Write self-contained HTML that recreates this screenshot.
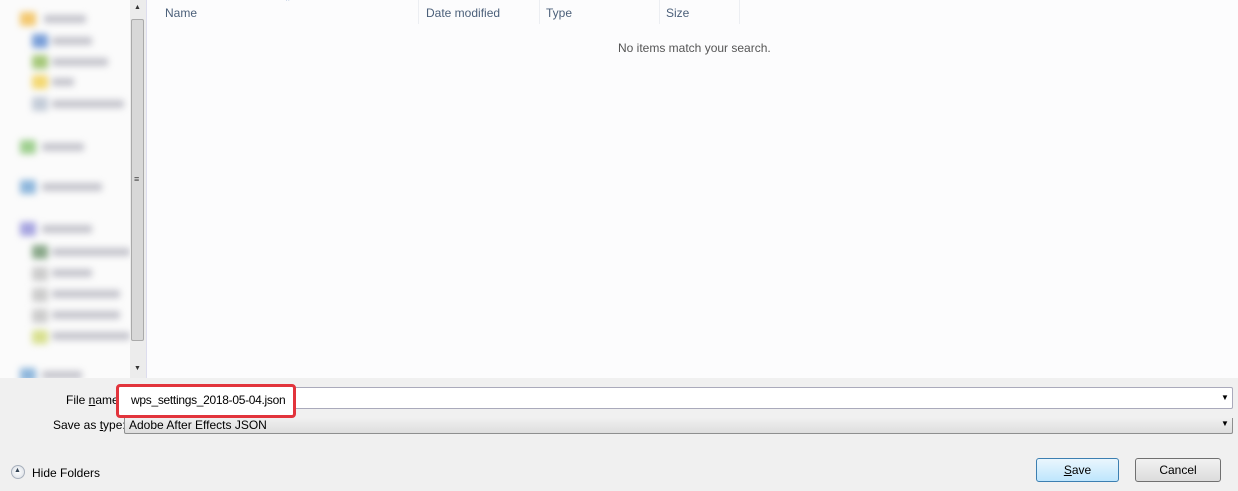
<!DOCTYPE html>
<html><head><style>
body{margin:0;width:1238px;height:491px;overflow:hidden;background:#f0f0f0;font-family:"Liberation Sans",sans-serif;font-size:12px;position:relative}
.a{position:absolute}
.side{left:0;top:0;width:130px;height:378px;background:#fbfbfb;overflow:hidden}
.blur{filter:blur(3.5px)}
.ic{position:absolute;width:16px;height:14px;border-radius:2px}
.tx{position:absolute;height:8px;background:#c4c4cc;border-radius:2px}
.hdr{color:#4c607a;font-size:12px}
</style></head><body>
<div class="a side"><div class="blur">
<div class="ic" style="left:20px;top:12px;background:#f3c870"></div><div class="tx" style="left:44px;top:15px;width:42px"></div>
<div class="ic" style="left:32px;top:34px;background:#7a9fd8"></div><div class="tx" style="left:52px;top:37px;width:40px"></div>
<div class="ic" style="left:32px;top:55px;background:#a6c87a"></div><div class="tx" style="left:52px;top:58px;width:56px"></div>
<div class="ic" style="left:32px;top:75px;background:#f3d873"></div><div class="tx" style="left:52px;top:78px;width:22px"></div>
<div class="ic" style="left:32px;top:97px;background:#c4ccd8"></div><div class="tx" style="left:52px;top:100px;width:72px"></div>
<div class="ic" style="left:20px;top:140px;background:#9fcf90"></div><div class="tx" style="left:42px;top:143px;width:42px"></div>
<div class="ic" style="left:20px;top:180px;background:#8fb7dc"></div><div class="tx" style="left:42px;top:183px;width:60px"></div>
<div class="ic" style="left:20px;top:222px;background:#a7a5e0"></div><div class="tx" style="left:42px;top:225px;width:50px"></div>
<div class="ic" style="left:32px;top:245px;background:#8aa88a"></div><div class="tx" style="left:52px;top:248px;width:78px"></div>
<div class="ic" style="left:32px;top:267px;background:#ccc"></div><div class="tx" style="left:52px;top:269px;width:40px"></div>
<div class="ic" style="left:32px;top:288px;background:#ccc"></div><div class="tx" style="left:52px;top:290px;width:68px"></div>
<div class="ic" style="left:32px;top:309px;background:#ccc"></div><div class="tx" style="left:52px;top:311px;width:68px"></div>
<div class="ic" style="left:32px;top:330px;background:#d8e090"></div><div class="tx" style="left:52px;top:332px;width:78px"></div>
<div class="ic" style="left:20px;top:368px;background:#8fb7dc"></div><div class="tx" style="left:42px;top:371px;width:40px"></div>
</div></div>
<div class="a" style="left:130px;top:0;width:16px;height:378px;background:#ececec"></div>
<div class="a" style="left:131px;top:19px;width:13px;height:322px;background:#d8d8d8;border:1px solid #aaa;box-sizing:border-box;border-radius:2px"></div>
<div class="a" style="left:134px;top:174px;font-size:9px;color:#444">≡</div>
<div class="a" style="left:134px;top:4px;font-size:7px;color:#333">▲</div>
<div class="a" style="left:134px;top:365px;font-size:7px;color:#333">▼</div>
<div class="a" style="left:146px;top:0;width:1px;height:378px;background:#dde"></div>
<div class="a" style="left:147px;top:0;width:1091px;height:378px;background:#fcfcfd"></div>
<div class="a hdr" style="left:165px;top:6px">Name</div>
<div class="a" style="left:286px;top:-2px;font-size:7px;color:#6a8fc0">^</div>
<div class="a" style="left:418px;top:0;width:1px;height:24px;background:#eceef2"></div>
<div class="a hdr" style="left:426px;top:6px">Date modified</div>
<div class="a" style="left:539px;top:0;width:1px;height:24px;background:#eceef2"></div>
<div class="a hdr" style="left:546px;top:6px">Type</div>
<div class="a" style="left:659px;top:0;width:1px;height:24px;background:#eceef2"></div>
<div class="a hdr" style="left:666px;top:6px">Size</div>
<div class="a" style="left:739px;top:0;width:1px;height:24px;background:#eceef2"></div>
<div class="a" style="left:618px;top:41px;color:#555">No items match your search.</div>

<div class="a" style="left:66px;top:393px;color:#000">File <u>n</u>ame:</div>
<div class="a" style="left:122px;top:387px;width:1111px;height:22px;background:#fff;border:1px solid #aab;box-sizing:border-box;border-radius:2px"></div>
<div class="a" style="left:1221px;top:393px;font-size:8px">▼</div>
<div class="a" style="left:116px;top:384px;width:180px;height:34px;border:3px solid #e2343c;box-sizing:border-box;border-radius:4px;background:#fff"></div>
<div class="a" style="left:131px;top:393px;color:#000;font-size:12px;letter-spacing:-0.3px">wps_settings_2018-05-04.json</div>
<div class="a" style="left:53px;top:418px;color:#000">Save as <u>t</u>ype:</div>
<div class="a" style="left:124px;top:418px;width:1109px;height:16px;background:linear-gradient(#f0f0f0,#dedede);border:1px solid #8e8f8f;border-top:none;box-sizing:border-box;border-radius:0 0 2px 2px"></div>
<div class="a" style="left:129px;top:418px;color:#000">Adobe After Effects JSON</div>
<div class="a" style="left:1221px;top:419px;font-size:8px">▼</div>

<div class="a" style="left:11px;top:465px;width:14px;height:14px;border-radius:50%;background:radial-gradient(#fff,#d8dde4);border:1px solid #a8b0bc;box-sizing:border-box"></div>
<div class="a" style="left:14px;top:467px;font-size:7px;color:#345">▲</div>
<div class="a" style="left:32px;top:466px;color:#000">Hide Folders</div>
<div class="a" style="left:1036px;top:458px;width:83px;height:24px;border:1px solid #3c7fb1;box-sizing:border-box;border-radius:3px;background:linear-gradient(#eaf6fd,#bee6fd);text-align:center;line-height:22px"><u>S</u>ave</div>
<div class="a" style="left:1135px;top:458px;width:86px;height:24px;border:1px solid #707070;box-sizing:border-box;border-radius:3px;background:linear-gradient(#f2f2f2,#dcdcdc);text-align:center;line-height:22px">Cancel</div>
</body></html>
